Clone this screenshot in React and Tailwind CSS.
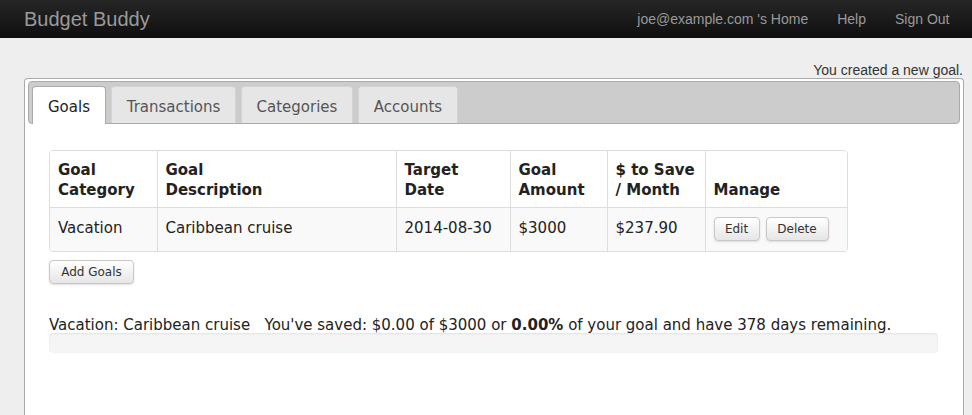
import React from "react";

const verdana = { fontFamily: '"DejaVu Sans", Verdana, sans-serif' };

function Btn({ children, className = "" }) {
  return (
    <button
      className={
        "h-[24px] rounded-[4px] border border-[#c8c8c8] bg-gradient-to-b from-white to-[#e6e6e6] px-[10px] text-[12px] leading-[22px] text-[#333] shadow-[0_1px_2px_rgba(0,0,0,0.12)] " +
        className
      }
      style={verdana}
    >
      {children}
    </button>
  );
}

export default function App() {
  const cols = [107, 239, 114, 97, 98, 143];
  return (
    <div className="min-h-[415px] bg-[#eeeeee]" style={{ fontFamily: '"Liberation Sans", Arial, sans-serif' }}>
      {/* Navbar */}
      <div className="flex h-[38px] items-center justify-between bg-gradient-to-b from-[#262626] to-[#0f0f0f] pl-[24px] pr-[8px]">
        <div className="text-[20px] text-[#9a9a9a]">Budget Buddy</div>
        <div className="flex text-[14px] text-[#9a9a9a]">
          <span className="px-[14.5px]">joe@example.com 's Home</span>
          <span className="px-[14.5px]">Help</span>
          <span className="px-[14.5px]">Sign Out</span>
        </div>
      </div>

      <div className="pl-[24px] pr-[8px]">
        <div className="flex h-[40px] items-end justify-end pr-[1px] text-[14px] leading-[16px] text-[#333]">
          You created a new goal.
        </div>
        <div className="h-[340px] rounded-t-[4px] border border-b-0 border-[#aaaaaa] bg-white px-[3px] pt-[2px]">
          {/* Tab bar */}
          <div className="flex h-[43px] items-end gap-[5px] rounded-[4px] border border-[#aaaaaa] bg-[#cccccc] pl-[3px]" style={verdana}>
            <div className="-mb-px flex h-[38px] w-[74px] items-center justify-center rounded-t-[4px] border border-b-0 border-[#aaaaaa] bg-white pt-[4px] text-[15px] text-[#222]">
              Goals
            </div>
            <div className="flex h-[37px] w-[125px] items-center justify-center rounded-t-[4px] border border-b-0 border-[#d3d3d3] bg-[#e6e6e6] pt-[4px] text-[15px] text-[#555]">
              Transactions
            </div>
            <div className="flex h-[37px] w-[112px] items-center justify-center rounded-t-[4px] border border-b-0 border-[#d3d3d3] bg-[#e6e6e6] pt-[4px] text-[15px] text-[#555]">
              Categories
            </div>
            <div className="flex h-[37px] w-[100px] items-center justify-center rounded-t-[4px] border border-b-0 border-[#d3d3d3] bg-[#e6e6e6] pt-[4px] text-[15px] text-[#555]">
              Accounts
            </div>
          </div>

          {/* Panel content */}
          <div className="pl-[21px] pt-[26px]" style={verdana}>
            <div className="w-[799px] overflow-hidden rounded-[4px] border border-[#dddddd]">
              <table className="w-full table-fixed border-collapse text-[15px] text-[#222]">
                <colgroup>
                  {cols.map((w, i) => (
                    <col key={i} style={{ width: w }} />
                  ))}
                </colgroup>
                <thead>
                  <tr className="bg-white">
                    {["Goal\nCategory", "Goal\nDescription", "Target\nDate", "Goal\nAmount", "$ to Save\n/ Month", "Manage"].map((h, i) => (
                      <th
                        key={i}
                        className={
                          "whitespace-pre-line px-[8px] pb-[7px] pt-[9px] text-left align-bottom font-bold leading-[20px] " +
                          (i > 0 ? "border-l border-[#dddddd]" : "")
                        }
                      >
                        {h}
                      </th>
                    ))}
                  </tr>
                </thead>
                <tbody>
                  <tr className="bg-[#f9f9f9]">
                    {["Vacation", "Caribbean cruise", "2014-08-30", "$3000", "$237.90"].map((c, i) => (
                      <td
                        key={i}
                        className={
                          "h-[43px] border-t border-[#dddddd] px-[8px] pt-[10px] align-top leading-[20px] " +
                          (i > 0 ? "border-l" : "")
                        }
                      >
                        {c}
                      </td>
                    ))}
                    <td className="border-l border-t border-[#dddddd] px-[8px] pt-[9px] align-top">
                      <div className="flex gap-[6px]">
                        <Btn className="w-[46px] px-0">Edit</Btn>
                        <Btn className="w-[63px] px-0">Delete</Btn>
                      </div>
                    </td>
                  </tr>
                </tbody>
              </table>
            </div>

            <div className="mt-[7px]">
              <Btn className="w-[85px] px-0">Add Goals</Btn>
            </div>

            <div className="mt-[33px] text-[15px] leading-[16px] text-[#222]">
              Vacation: Caribbean cruise&nbsp;&nbsp;&nbsp;You've saved: $0.00 of $3000 or <b>0.00%</b> of your goal and have 378 days remaining.
            </div>
            <div className="h-[20px] w-[889px] rounded-[4px] bg-[#f5f5f5] shadow-[inset_0_1px_2px_rgba(0,0,0,0.08)]"></div>
          </div>
        </div>
      </div>
    </div>
  );
}
